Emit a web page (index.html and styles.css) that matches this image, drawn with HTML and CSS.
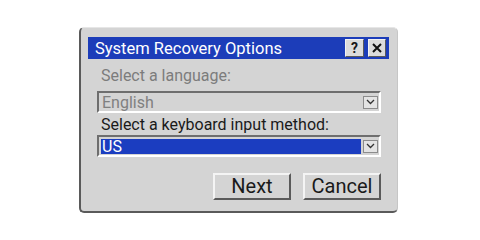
FILE: index.html
```html
<!DOCTYPE html>
<html lang="en">

<head>
	<meta charset="UTF-8">
	<title>System Recovery Options</title>
	<link rel="stylesheet" href="styles.css">
</head>

<body>
	<div class="dialog">
		<div class="titlebar">
			<span class="title">System Recovery Options</span>
			<span class="titlebar--buttons">
				<span class="tb-btn">?</span>
				<span class="tb-btn tb-close">
					<svg width="10" height="10" viewBox="0 0 10 10"><path d="M1 1 L9 9 M9 1 L1 9" stroke="#111" stroke-width="2" fill="none"/></svg>
				</span>
			</span>
		</div>

		<div class="dialog--body">
			<div class="field-label muted">Select a language:</div>
			<div class="combo combo--disabled">
				<span class="combo-value">English</span>
				<span class="combo-drop"><svg width="9" height="6" viewBox="0 0 9 6"><path d="M1 1 L4.5 4.5 L8 1" stroke="#333" stroke-width="1.3" fill="none"/></svg></span>
			</div>

			<div class="field-label label-2">Select a keyboard input method:</div>
			<div class="combo combo--2">
				<span class="combo-value selected">US</span>
				<span class="combo-drop"><svg width="9" height="6" viewBox="0 0 9 6"><path d="M1 1 L4.5 4.5 L8 1" stroke="#333" stroke-width="1.3" fill="none"/></svg></span>
			</div>

			<div class="actions">
				<button class="btn">Next</button>
				<button class="btn">Cancel</button>
			</div>
		</div>
	</div>
</body>

</html>
```

FILE: styles.css
```css
body {
	margin: 0;
	padding: 0;
	background: #fff;
	font-family: Roboto, 'Liberation Sans', sans-serif;
}

.dialog {
	box-sizing: border-box;
	width: 319px;
	height: 186px;
	margin: 27px 0 0 79px;
	padding: 9px 8px 0 7px;
	background: #d4d4d4;
	border-style: solid;
	border-width: 1px 1px 2px 2px;
	border-color: #e6e6e6 #c6c6c6 #5a5a5a #5a5a5a;
	border-radius: 5px;
}

.titlebar {
	height: 22px;
	background: #1c3db9;
	color: #fff;
	display: flex;
	align-items: center;
	justify-content: space-between;
	padding: 0 3px 0 7px;
	font-size: 16.5px;
}

.titlebar--buttons {
	display: flex;
	gap: 4px;
}

.tb-btn {
	box-sizing: border-box;
	width: 19px;
	height: 18px;
	display: flex;
	align-items: center;
	justify-content: center;
	background: #dcdcdc;
	border: 1px solid;
	border-color: #f2f2f2 #5a5a5a #5a5a5a #f2f2f2;
	color: #1a1a1a;
	font-weight: bold;
	font-size: 14px;
}

.tb-close {
	width: 18px;
}

.dialog--body {
	padding: 8px 8px 0 9px;
}

.field-label {
	font-size: 16px;
	line-height: 18px;
	padding-left: 4px;
	color: #1a1a1a;
}

.muted {
	color: #7c7c7c;
}

.label-2 {
	margin-top: 3px;
}

.combo {
	box-sizing: border-box;
	height: 22px;
	margin-top: 6px;
	display: flex;
	align-items: center;
	padding: 2px 1px 2px 2px;
	border: 2px solid;
	border-color: #6e6e6e #fff #fff #6e6e6e;
}

.combo--2 {
	margin-top: 1px;
}

.combo-value {
	flex: 1;
	height: 15px;
	line-height: 15px;
	padding-left: 1px;
	font-size: 16px;
	color: #1a1a1a;
}

.combo--disabled .combo-value {
	color: #808080;
}

.combo-value.selected {
	background: #1b3dc0;
	color: #fff;
}

.combo-drop {
	box-sizing: border-box;
	width: 15px;
	height: 13px;
	margin-left: 2px;
	display: flex;
	align-items: center;
	justify-content: center;
	background: #e4e4e4;
	border: 1px solid #8c8c8c;
}

.actions {
	display: flex;
	justify-content: flex-end;
	gap: 12px;
	margin-top: 16px;
}

.btn {
	box-sizing: border-box;
	width: 78px;
	height: 27px;
	padding: 0;
	background: #d4d4d4;
	border: 2px solid;
	border-color: #f4f4f4 #5a5a5a #5a5a5a #f4f4f4;
	font-family: Roboto, 'Liberation Sans', sans-serif;
	font-size: 20px;
	line-height: 23px;
	color: #1a1a1a;
}
```
